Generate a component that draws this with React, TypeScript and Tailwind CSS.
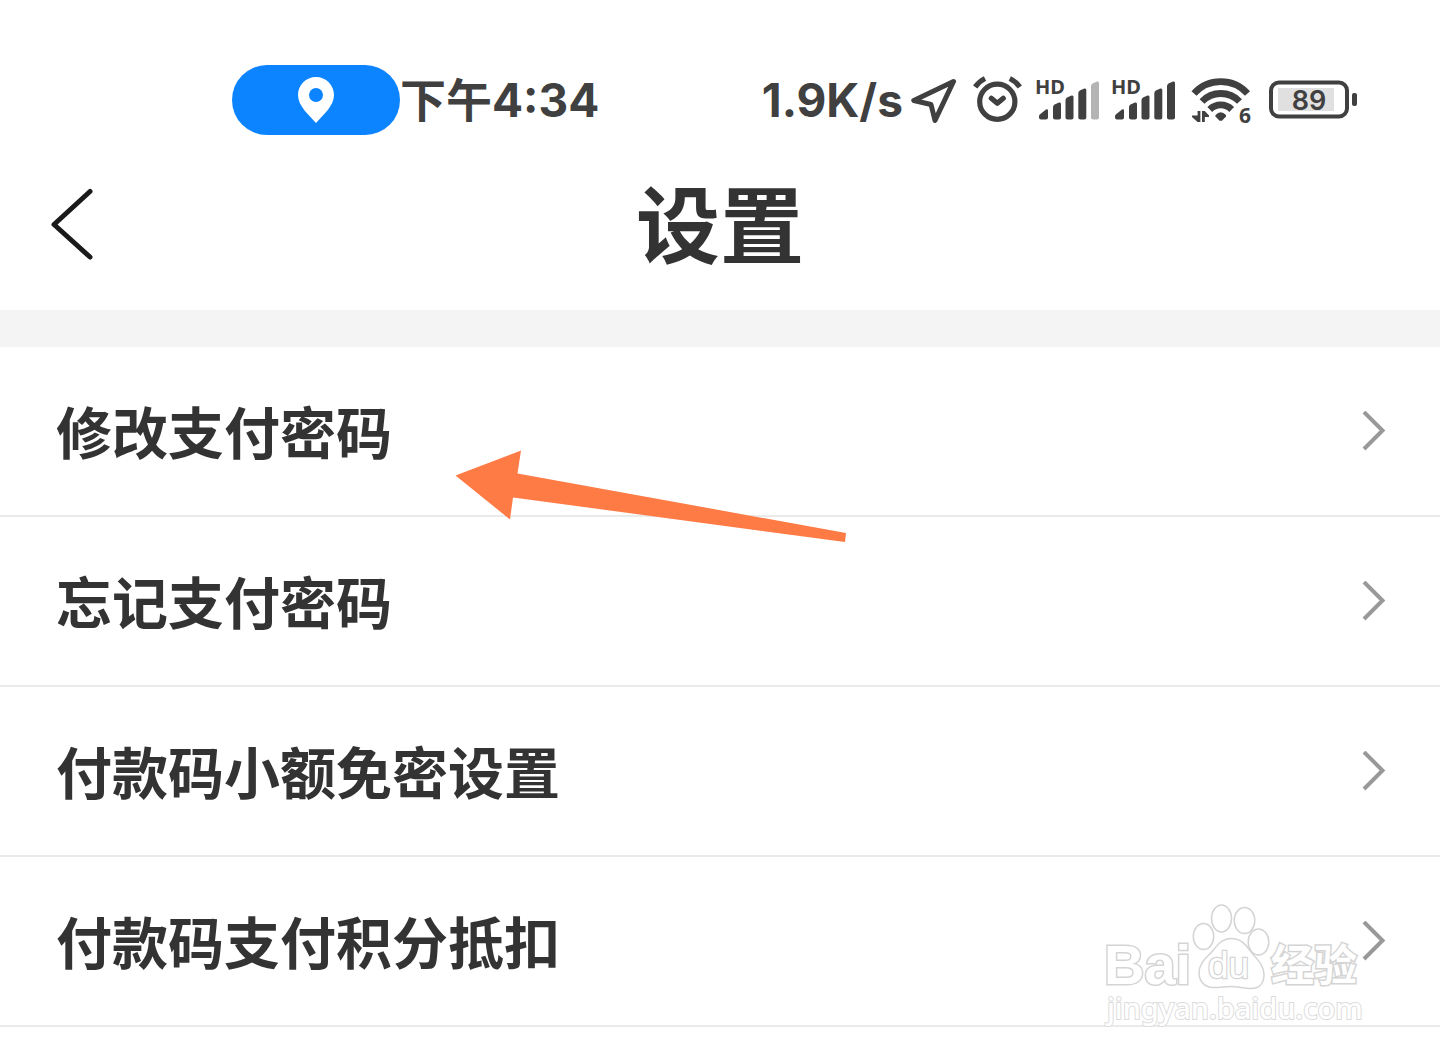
const ROWS = ['修改支付密码', '忘记支付密码', '付款码小额免密设置', '付款码支付积分抵扣'];

function LocationPill() {
    return (
        <div className="flex h-[70px] w-[168px] items-center justify-center rounded-full bg-[#0d84ff]">
            <svg className="h-[46px] w-9" viewBox="0 0 36 46" fill="white">
                <path fillRule="evenodd" d="M18 0C8 0 0 8 0 18c0 11 11 20 18 28 7-8 18-17 18-28C36 8 28 0 18 0zm0 11a7 7 0 1 1 0 14 7 7 0 0 1 0-14z" />
            </svg>
        </div>
    );
}

function NavigationIcon() {
    return (
        <svg className="h-[60px] w-[46px]" viewBox="0 0 46 60" fill="none" stroke="#404040" strokeWidth={5} strokeLinejoin="round">
            <path d="M42.500 11.500L2.800 30.500l17.200 4 4 16z" />
        </svg>
    );
}

function AlarmIcon() {
    return (
        <svg className="h-[60px] w-[62px]" viewBox="0 0 62 60" fill="none" stroke="#404040" strokeWidth={5.2}>
            <circle cx="32.300" cy="31.700" r="17.600" />
            <path d="M10.200 17Q14 11.500 20 8.500M44.800 8.500Q51 11.500 54.800 17" />
            <path d="M26.300 28.300l6 5 6-5" strokeLinecap="round" strokeLinejoin="round" />
        </svg>
    );
}

function SignalIcon({ weak = false }: { weak?: boolean }) {
    return (
        <svg className="h-[60px] w-[68px]" viewBox="0 0 68 60" fill="#404040">
            <text x="0" y="24" fontSize="20" className="font-['Noto_Sans'] font-bold">HD</text>
            <path d="M4 46q0-1.500 2-2.500l5-4q2-1 2 1v7q0 2-2 2H6q-2 0-2-2z" />
            <path d="M18 37q0-1.500 1.500-2.500l4.500-2q2-.500 2 1.500v13.500q0 2-2 2h-4q-2 0-2-2z" />
            <path d="M30.500 30q0-1.500 1.500-2.500l4.500-2q2-.500 2 1.500v20.500q0 2-2 2h-4q-2 0-2-2z" />
            <path d="M43.300 23q0-1.500 1.500-2.500l4.500-2q2-.500 2 1.500v27.500q0 2-2 2h-4q-2 0-2-2z" />
            <path fill={weak ? '#b4b4b4' : '#404040'} d="M56 16q0-1.500 1.500-2.500l4.500-2q2-.500 2 1.500v34.500q0 2-2 2h-4q-2 0-2-2z" />
        </svg>
    );
}

function WifiIcon() {
    return (
        <svg className="h-[60px] w-[70px]" viewBox="0 0 70 60" fill="none" stroke="#404040" strokeWidth={6.8}>
            <path d="M7 23.500A36 36 0 0 1 60.500 23.500" />
            <path d="M15 31.500A26 26 0 0 1 52.500 31.500" />
            <path d="M22.800 39.500A15.500 15.500 0 0 1 44.700 39.500" />
            <path d="M28.500 45q5.300-5.500 10.500 0v1.500l-4 4.200h-2.500l-4-4.200z" fill="#404040" stroke="none" />
            <path d="M10.600 41h2.800v11h-2.800l-5.600-5v-1.500h5.600zM15 41h2.800l4.200 4.500V47h-4.200v5H15z" fill="#404040" stroke="none" />
            <text x="52" y="52.500" fontSize="21" fill="#404040" stroke="none" className="font-['Noto_Sans'] font-bold">6</text>
        </svg>
    );
}

function BatteryIcon() {
    return (
        <svg className="h-[60px] w-[92px]" viewBox="0 0 92 60">
            <rect x="6" y="12.500" width="76" height="34" rx="8" fill="none" stroke="#404040" strokeWidth={4} />
            <rect x="13" y="18" width="56" height="23" fill="#e0e0e0" />
            <rect x="87" y="23" width="5" height="13" rx="2" fill="#404040" />
            <text x="44" y="40" fontSize="27" textAnchor="middle" fill="#404040" className="font-['Inter'] font-semibold">89</text>
        </svg>
    );
}

function Watermark() {
    return (
        <svg
            className="pointer-events-none absolute right-10 top-[890px] h-[150px] w-[310px]"
            viewBox="0 0 310 150"
            fill="white"
            stroke="#d4d4d4"
            strokeWidth={1.500}
        >
            <text x="14" y="94" fontSize="56" strokeWidth={3} paintOrder="stroke" className="font-['Liberation_Sans'] font-bold">Bai</text>
            <ellipse cx="113.500" cy="46.500" rx="10.200" ry="13" />
            <ellipse cx="131.500" cy="28.500" rx="10" ry="13.500" />
            <ellipse cx="154.500" cy="30.500" rx="10.300" ry="13" />
            <ellipse cx="168.500" cy="52" rx="10.300" ry="13" />
            <path d="M141 48.500c-9 0-14 7-18 12-5 6-14 12-14 22 0 9 6 15 14 15 7 0 12-1 18-1s14 2 20 2c8 0 13-5 13-14 0-10-8-16-14-24-5-7-10-12-19-12z" />
            <text x="118" y="88" fontSize="37" strokeWidth={2.500} paintOrder="stroke" className="font-['Liberation_Sans']">du</text>
            <text x="181" y="91" fontSize="43" strokeWidth={3} paintOrder="stroke" className="font-['Noto_Sans_CJK_SC'] font-bold">经验</text>
            <text x="17" y="129" fontSize="29" strokeWidth={2} stroke="#dcdcdc" paintOrder="stroke" className="font-['Noto_Sans'] font-medium">jingyan.baidu.com</text>
        </svg>
    );
}

export default function App() {
    return (
        <div className="relative min-h-screen overflow-hidden bg-white font-['Noto_Sans_CJK_SC',sans-serif] text-[#333333]">
            {/* Status bar */}
            <div className="flex h-[135px] items-center justify-between pl-[232px] pr-[83px] pt-[65px] font-['Inter','Noto_Sans_CJK_SC',sans-serif] text-[46px] font-bold leading-[70px] text-[#404040]">
                <div className="flex items-center">
                    <LocationPill />
                    <span>下午4:34</span>
                </div>
                <div className="flex items-center gap-2">
                    <span>1.9K/s</span>
                    <NavigationIcon />
                    <AlarmIcon />
                    <SignalIcon weak />
                    <SignalIcon />
                    <WifiIcon />
                    <BatteryIcon />
                </div>
            </div>

            <header className="grid h-[175px] grid-cols-[1fr_auto_1fr] items-center px-12">
                <button type="button" aria-label="返回" className="w-12">
                    <svg className="h-20 w-12" viewBox="0 0 48 80" fill="none" stroke="#1a1a1a" strokeWidth={5} strokeLinecap="round" strokeLinejoin="round">
                        <path d="M42 8.500L6 41.500l36 32.500" />
                    </svg>
                </button>
                <h1 className="pb-1 text-[84px] font-bold leading-[120px]">设置</h1>
            </header>

            <div className="h-[37px] bg-[#f4f4f4]" />

            <nav>
                {ROWS.map((label) => (
                    <a key={label} href="#" className="flex h-[170px] items-center justify-between border-b-2 border-[#ebebeb] pl-14 pr-[54px]">
                        <span className="pb-0.5 text-[56px] font-bold leading-[84px]">{label}</span>
                        <svg className="h-10 w-6" viewBox="0 0 24 40" fill="none" stroke="#999999" strokeWidth={4}>
                            <path d="M2 1l18.500 18.500L2 38" />
                        </svg>
                    </a>
                ))}
            </nav>

            {/* Pointer to the first row */}
            <svg className="pointer-events-none absolute left-[440px] top-[430px] h-[130px] w-[420px]" viewBox="0 0 420 130" fill="#ff7b45">
                <path d="M15.500 45.500L81 20.500l-3.500 23L406 103l-1 9L73 67.500l-3 22z" />
            </svg>

            <Watermark />
        </div>
    );
}
